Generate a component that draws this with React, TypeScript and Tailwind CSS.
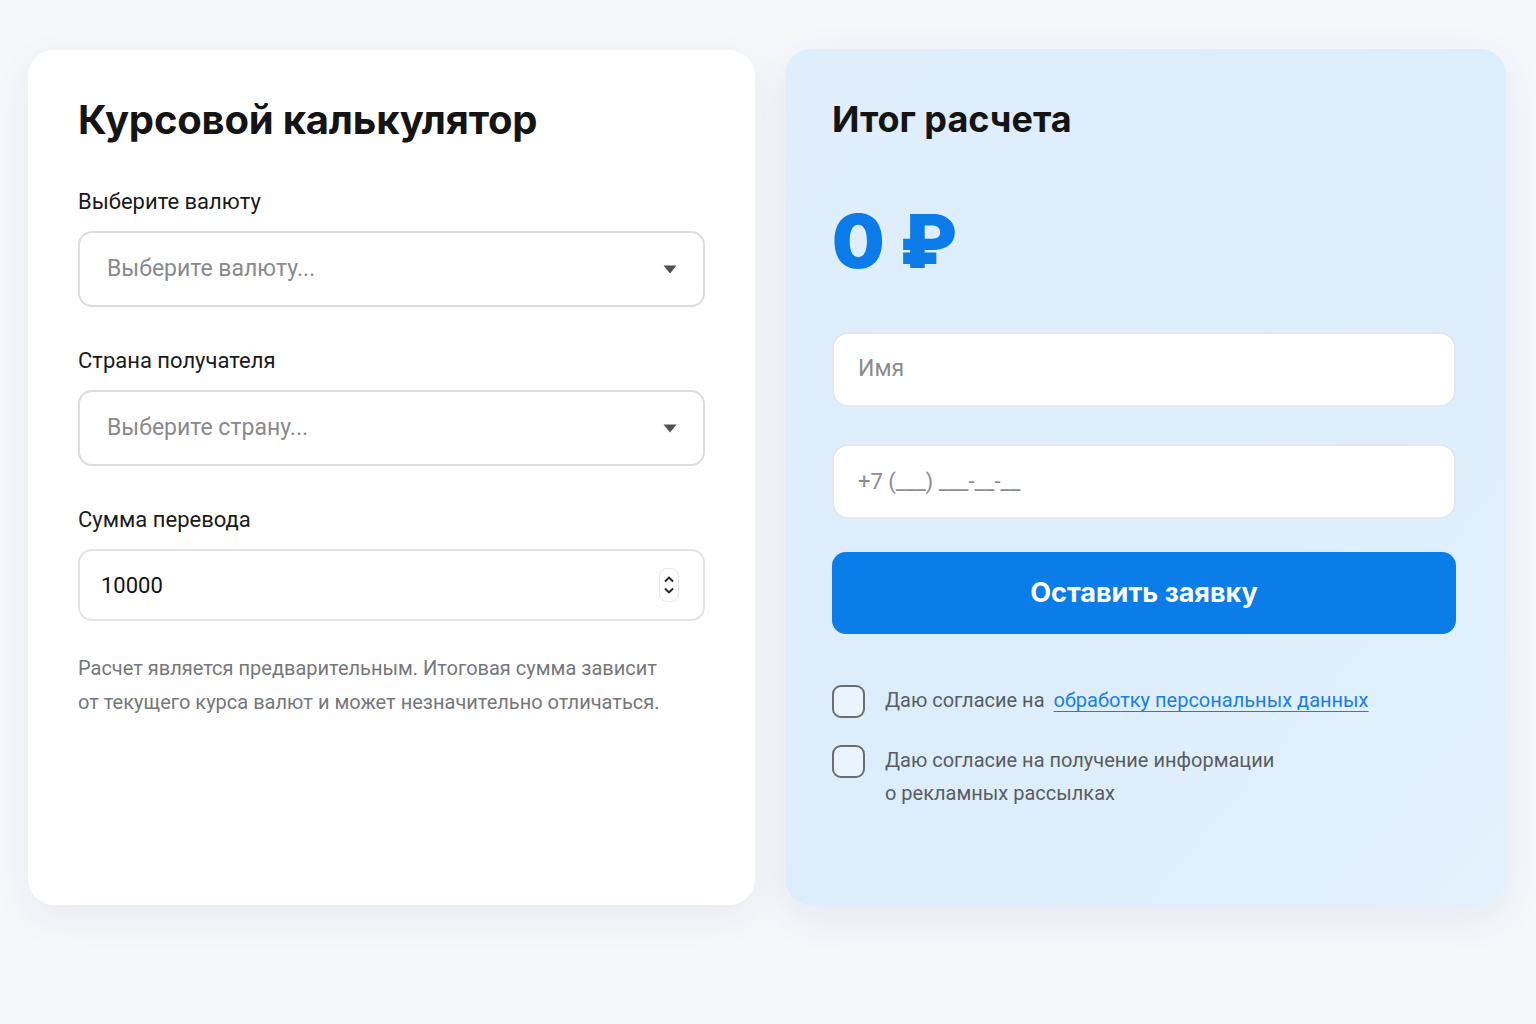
import type { ReactNode } from "react";

const body = { fontFamily: "Roboto, 'Noto Sans', sans-serif" };
const head = { fontFamily: "Inter, 'Noto Sans', sans-serif" };

function Field({ label, children }: { label: string; children: ReactNode }) {
  return (
    <div className="flex flex-col">
      <label className="mb-[15px] text-[22px] leading-[28px] text-[#1a1a1a]" style={body}>
        {label}
      </label>
      {children}
    </div>
  );
}

function SelectBox({ placeholder }: { placeholder: string }) {
  return (
    <div className="flex h-[76px] items-center justify-between rounded-[14px] border-2 border-[#dcdde0] bg-white pl-[27px] pr-[24px]">
      <span className="text-[23px] text-[#8a8a8e]" style={body}>
        {placeholder}
      </span>
      <svg width="14" height="9" viewBox="0 0 14 9" className="mr-[2px]">
        <path d="M0.5 0.5h13L7 8.5z" fill="#505057" />
      </svg>
    </div>
  );
}

function Checkbox({ children }: { children: ReactNode }) {
  return (
    <div className="flex items-start gap-[20px]">
      <span className="mt-[1px] h-[33px] w-[33px] shrink-0 rounded-[9px] border-2 border-[#6b6d73] bg-white/40" />
      <p className="text-[20px] leading-[33px] text-[#5a5c61]" style={body}>
        {children}
      </p>
    </div>
  );
}

export default function App() {
  return (
    <main className="min-h-screen bg-[#f5f7fb] px-[28px] pt-[50px]">
      <div className="grid grid-cols-[727px_721px] gap-[30px]">
        {/* Left: calculator */}
        <section className="h-[855px] rounded-[26px] bg-white px-[50px] pt-[44px] shadow-[0_12px_40px_rgba(30,50,90,0.06)]">
          <h1 className="text-[40px] font-bold leading-[52px] tracking-[-0.2px] text-[#141414]" style={head}>
            Курсовой калькулятор
          </h1>

          <div className="mt-[42px] flex flex-col gap-[40px]">
            <Field label="Выберите валюту">
              <SelectBox placeholder="Выберите валюту..." />
            </Field>
            <Field label="Страна получателя">
              <SelectBox placeholder="Выберите страну..." />
            </Field>
            <Field label="Сумма перевода">
              <div className="flex h-[72px] items-center justify-between rounded-[14px] border-2 border-[#e3e4e7] bg-white pl-[21px] pr-[24px]">
                <span className="text-[22px] text-[#111]" style={body}>
                  10000
                </span>
                <div className="flex h-[34px] w-[20px] flex-col items-center justify-center rounded-[8px] border border-[#e6e6e9]">
                  <svg width="10" height="7" viewBox="0 0 10 7">
                    <path d="M1 5.5L5 1.5l4 4" stroke="#222" strokeWidth="1.8" fill="none" />
                  </svg>
                  <svg width="10" height="7" viewBox="0 0 10 7" className="mt-[4px]">
                    <path d="M1 1.5L5 5.5l4-4" stroke="#222" strokeWidth="1.8" fill="none" />
                  </svg>
                </div>
              </div>
            </Field>
          </div>

          <p className="mt-[30px] text-[20px] leading-[34px] text-[#76777b]" style={body}>
            Расчет является предварительным. Итоговая сумма зависит
            <br />
            от текущего курса валют и может незначительно отличаться.
          </p>
        </section>

        {/* Right: result */}
        <section className="-mt-[1px] h-[856px] rounded-[26px] bg-gradient-to-br from-[#e1effc] via-[#dcedfc] to-[#e4f2fe] pl-[47px] pr-[50px] pt-[46px] shadow-[0_12px_40px_rgba(30,80,140,0.08)]">
          <h2 className="text-[36px] font-bold leading-[48px] text-[#141414]" style={head}>
            Итог расчета
          </h2>

          <div className="mt-[54px] text-[74px] font-black leading-[88px] text-[#0a7be8]" style={head}>
            0 ₽
          </div>

          <div className="mt-[47px] flex flex-col gap-[37px]">
            <div className="flex h-[75px] items-center rounded-[16px] border-2 border-[#e4e8ee] bg-white px-[24px]">
              <span className="text-[23px] text-[#8b8c90]" style={body}>
                Имя
              </span>
            </div>
            <div className="flex h-[75px] items-center rounded-[16px] border-2 border-[#e4e8ee] bg-white px-[24px]">
              <span className="text-[22px] text-[#8b8c90]" style={body}>
                +7 (___) ___-__-__
              </span>
            </div>
          </div>

          <button className="mt-[33px] flex h-[82px] w-full items-center justify-center rounded-[14px] bg-[#0b7de9] text-[27px] font-bold text-white" style={head}>
            Оставить заявку
          </button>

          <div className="mt-[50px] flex flex-col gap-[26px]">
            <Checkbox>
              Даю согласие на{" "}
              <a className="ml-[4px] text-[#1a7ee6] underline decoration-1 underline-offset-[4px]">обработку персональных данных</a>
            </Checkbox>
            <Checkbox>
              Даю согласие на получение информации
              <br />о рекламных рассылках
            </Checkbox>
          </div>
        </section>
      </div>
    </main>
  );
}
